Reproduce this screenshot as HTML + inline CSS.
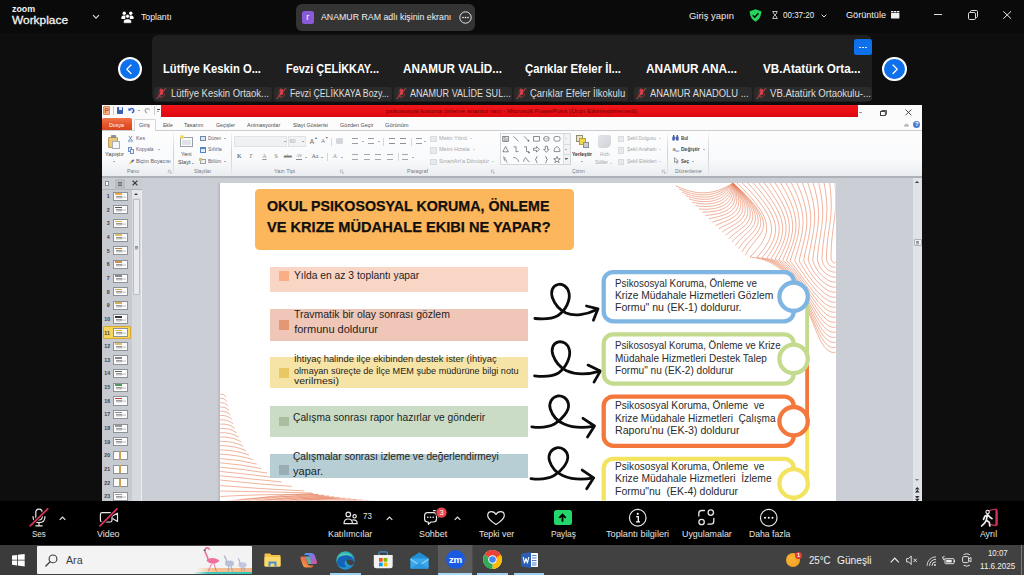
<!DOCTYPE html>
<html lang="tr"><head>
<meta charset="utf-8">
<title>Zoom Workplace</title>
<style>
html,body{margin:0;padding:0;}
body{width:1024px;height:575px;overflow:hidden;background:#000;position:relative;font-family:"Liberation Sans",sans-serif;color:#fff;}
.a{position:absolute;}
.t{position:absolute;white-space:nowrap;line-height:1;transform-origin:0 0;}
svg{position:absolute;overflow:visible;}
/* top bar */
#topbar{left:0;top:0;width:1024px;height:33px;background:#0a0a0a;}
#below{left:0;top:33px;width:1024px;height:468px;background:#0e0e0e;}
#pill{left:296px;top:4px;width:179px;height:26.5px;background:#343434;border-radius:6px;}
#purple{left:301.5px;top:11.3px;width:12.5px;height:12.5px;background:#8a5bd8;border-radius:2.5px;}
#strip{left:152px;top:35px;width:720px;height:67px;background:#1f1f1f;border-radius:6px;}
.nm{font-weight:bold;font-size:12px;color:#fff;}
.lb{top:86.7px;height:14.6px;background:#2b2b2b;border-radius:3px;}
.lbt{font-size:10px;color:#dedede;}
.arrowc{width:20.200px;height:20.200px;border-radius:50%;background:#0e71eb;border:2px solid #fff;}

.tb{font-size:5.600px;color:#4a4d52;}
.rb{font-size:5.400px;color:#5e6268;}
.rl{font-size:5.400px;color:#a3a7ad;}
.rg{font-size:5.400px;color:#767b82;}
.gs{top:133px;width:0.7px;height:41px;background:linear-gradient(#f0f1f3,#cdd1d6 50%,#e3e5e8);}
.dd{width:0;height:0;border-left:1.200px solid transparent;border-right:1.200px solid transparent;border-top:1.500px solid #666;}
.li{width:6px;height:6.500px;box-sizing:border-box;border-top:0.8px solid #9a9fa7;border-bottom:0.8px solid #9a9fa7;background:linear-gradient(transparent 42%,#9a9fa7 42%,#9a9fa7 58%,transparent 58%);}
.li2{width:6px;height:6.500px;box-sizing:border-box;border-top:1px solid #a4a8af;border-bottom:1px solid #a4a8af;background:linear-gradient(transparent 40%,#a4a8af 40%,#a4a8af 62%,transparent 62%);}
.ic{width:6.500px;height:6.500px;opacity:.6;background:#dcdfe3;border:0.5px solid #c2c6cc;box-sizing:border-box;border-radius:0.8px;}
.zl{font-size:9.600px;color:#e4e4e4;}
</style>
</head>
<body>
<div id="topbar" class="a"></div>
<div id="below" class="a"></div>
<!-- zoom workplace logo text -->
<span class="t" style="left: 12px; font-size: 9.3px; color: rgb(242, 242, 242); font-weight: bold; top: 4.83px; transform: scaleX(0.955);">zoom</span>
<span class="t" style="left: 12px; font-size: 11.4px; color: rgb(242, 242, 242); -webkit-text-stroke: 0.3px rgb(242, 242, 242); top: 14.95px; transform: scaleX(1.045);">Workplace</span>
<svg style="left:92px;top:14px" width="8" height="6" viewBox="0 0 8 6"><path d="M1 1.2 L4 4.2 L7 1.2" fill="none" stroke="#ddd" stroke-width="1.1"></path></svg>
<!-- people icon -->
<svg style="left:121px;top:11px" width="13" height="12.5" viewBox="0 0 26 25">
 <circle cx="6.5" cy="4.5" r="3.4" fill="#fff"></circle><circle cx="19.5" cy="4.5" r="3.4" fill="#fff"></circle>
 <path d="M0.5 14 C0.5 9.5 4 9 6.5 9 C9 9 10 9.8 10 9.8 L8 16 L2.5 16 C1 16 0.5 15.3 0.5 14Z" fill="#fff"></path>
 <path d="M25.5 14 C25.5 9.5 22 9 19.5 9 C17 9 16 9.8 16 9.8 L18 16 L23.500 16 C25 16 25.5 15.3 25.5 14Z" fill="#fff"></path>
 <circle cx="13" cy="10.5" r="4" fill="#fff" stroke="#0a0a0a" stroke-width="1.4"></circle>
 <path d="M5 21.500 C5 17 9 16 13 16 C17 16 21 17 21 21.500 C21 23.500 20 24.500 18.500 24.500 L7.500 24.500 C6 24.500 5 23.500 5 21.500Z" fill="#fff" stroke="#0a0a0a" stroke-width="1.2"></path>
</svg>
<span class="t" style="left: 141.4px; font-size: 9.8px; color: rgb(240, 240, 240); top: 11.7px; transform: scaleX(0.891);">Toplantı</span>
<!-- pill -->
<div id="pill" class="a"></div>
<div id="purple" class="a"></div>
<span class="t" style="left: 306.3px; font-size: 9px; color: rgb(255, 255, 255); top: 13.38px;">r</span>
<span class="t" style="left: 321px; font-size: 9.6px; color: rgb(240, 240, 240); top: 11.97px; transform: scaleX(0.915);">ANAMUR RAM adlı kişinin ekranı</span>
<svg style="left:458.500px;top:11px" width="13" height="13" viewBox="0 0 13 13"><circle cx="6.5" cy="6.5" r="5.7" fill="none" stroke="#e8e8e8" stroke-width="1"></circle><circle cx="4" cy="6.5" r="0.8" fill="#fff"></circle><circle cx="6.5" cy="6.5" r="0.8" fill="#fff"></circle><circle cx="9" cy="6.5" r="0.8" fill="#fff"></circle></svg>
<!-- right side -->
<span class="t" style="left: 689.4px; font-size: 9.8px; color: rgb(237, 237, 237); top: 10.5px; transform: scaleX(0.961);">Giriş yapın</span>
<svg style="left:749.4px;top:8.6px" width="13" height="13" viewBox="0 0 26 26"><path d="M13 0.5 L24.500 4.500 C24.500 4.500 25.500 19 13 25.500 C0.5 19 1.500 4.500 1.500 4.500Z" fill="#24d65a"></path><path d="M7.500 12.500 L11.500 16.500 L19 8.500" fill="none" stroke="#0a0a0a" stroke-width="3"></path></svg>
<svg style="left:772.3px;top:11.2px" width="6" height="8" viewBox="0 0 12 16"><path d="M1 1 H11 M1 15 H11 M2.500 1 V4 L6 8 L9.500 4 V1 M2.500 15 V12 L6 8 L9.500 12 V15" fill="none" stroke="#e6e6e6" stroke-width="1.6"></path></svg>
<span class="t" style="left: 782.8px; font-size: 9.6px; color: rgb(240, 240, 240); top: 10.17px; transform: scaleX(0.835);">00:37:20</span>
<svg style="left:820.5px;top:13.6px" width="6" height="4" viewBox="0 0 6 4"><path d="M0.6 0.6 L3 3 L5.4 0.6" fill="none" stroke="#ddd" stroke-width="1"></path></svg>
<span class="t" style="left: 845.5px; font-size: 9.6px; color: rgb(240, 240, 240); top: 10.07px; transform: scaleX(0.949);">Görüntüle</span>
<svg style="left:891px;top:10.9px" width="8.4" height="7.6" viewBox="0 0 84 76"><rect x="0" y="0" width="24" height="14" fill="#eee"></rect><rect x="30" y="0" width="24" height="14" fill="#eee"></rect><rect x="60" y="0" width="24" height="14" fill="#eee"></rect><rect x="0" y="20" width="84" height="56" rx="6" fill="#eee"></rect></svg>
<div class="a" style="left:934px;top:14.2px;width:8.4px;height:1px;background:#ddd"></div>
<svg style="left:967.5px;top:10.3px" width="10" height="10" viewBox="0 0 10 10"><rect x="0.5" y="2.500" width="7" height="7" rx="1.2" fill="none" stroke="#ddd" stroke-width="1"></rect><path d="M2.500 2.500 V1.700 Q2.500 0.5 3.700 0.5 H8.300 Q9.500 0.5 9.500 1.700 V6.300 Q9.500 7.500 8.300 7.500 H7.500" fill="none" stroke="#ddd" stroke-width="1"></path></svg>
<svg style="left:1002.7px;top:11.2px" width="8.4" height="8" viewBox="0 0 8.4 8"><path d="M0.3 0.3 L8.100 7.700 M8.100 0.3 L0.3 7.700" stroke="#e6e6e6" stroke-width="1"></path></svg>

<!-- gallery strip -->
<div id="strip" class="a"></div>
<div class="a arrowc" style="left:117.5px;top:56.800px"></div>
<svg style="left:124.500px;top:63.500px" width="8" height="10.500" viewBox="0 0 8 10.500"><path d="M6 1 L1.800 5.250 L6 9.500" fill="none" stroke="#fff" stroke-width="1.250" stroke-linecap="round" stroke-linejoin="round"></path></svg>
<div class="a arrowc" style="left:882.4px;top:56.800px"></div>
<svg style="left:890.5px;top:63.500px" width="8" height="10.500" viewBox="0 0 8 10.500"><path d="M2 1 L6.200 5.250 L2 9.500" fill="none" stroke="#fff" stroke-width="1.250" stroke-linecap="round" stroke-linejoin="round"></path></svg>
<div class="a" style="left:854px;top:39px;width:17.5px;height:16px;background:#0e71eb;border-radius:2.5px"></div>
<div class="a" style="left:859.3px;top:46.500px;width:1.6px;height:1.6px;background:#fff;border-radius:50%;box-shadow:3px 0 0 #fff,6px 0 0 #fff"></div>

<span class="t nm" style="left: 163px; top: 62.64px; transform: scaleX(0.936);">Lütfiye Keskin O...</span>
<span class="t nm" style="left: 285.5px; top: 62.64px; transform: scaleX(0.909);">Fevzi ÇELİKKAY...</span>
<span class="t nm" style="left: 403px; top: 62.64px; transform: scaleX(0.973);">ANAMUR VALİD...</span>
<span class="t nm" style="left: 524.5px; top: 62.64px; transform: scaleX(0.947);">Çarıklar Efeler İl...</span>
<span class="t nm" style="left: 646px; top: 62.64px; transform: scaleX(0.987);">ANAMUR ANA...</span>
<span class="t nm" style="left: 763px; top: 62.64px; transform: scaleX(0.975);">VB.Atatürk Orta...</span>

<div class="a lb" style="left:154.4px;width:117.3px"></div>
<div class="a lb" style="left:274.4px;width:117.3px"></div>
<div class="a lb" style="left:394.4px;width:117.3px"></div>
<div class="a lb" style="left:514.4px;width:114px"></div>
<div class="a lb" style="left:634.4px;width:117.3px"></div>
<div class="a lb" style="left:754.4px;width:117.3px"></div>
<span class="t lbt" style="left: 170.7px; top: 89.04px; transform: scaleX(0.948);">Lütfiye Keskin Ortaok...</span>
<span class="t lbt" style="left: 290.4px; top: 89.04px; transform: scaleX(0.877);">Fevzi ÇELİKKAYA Bozy...</span>
<span class="t lbt" style="left: 410px; top: 89.04px; transform: scaleX(0.903);">ANAMUR VALİDE SUL...</span>
<span class="t lbt" style="left: 530.4px; top: 89.04px; transform: scaleX(0.946);">Çarıklar Efeler İlkokulu</span>
<span class="t lbt" style="left: 649.5px; top: 89.04px; transform: scaleX(0.938);">ANAMUR ANADOLU ...</span>
<span class="t lbt" style="left: 769.5px; top: 89.04px; transform: scaleX(0.956);">VB.Atatürk Ortaokulu-...</span>
<svg style="left:156.300px;top:88.300px" width="10.500" height="11.500" viewBox="0 0 10.500 11.500"><rect x="3.500" y="0.5" width="3.600" height="6.500" rx="1.800" fill="#d23a42"></rect><path d="M2 5.500 Q2 8.800 5.300 8.800 Q8.600 8.800 8.600 5.500 M5.300 8.800 V10.600" fill="none" stroke="#c8363c" stroke-width="0.8" opacity=".8"></path><path d="M0.800 11 L9.800 0.300" stroke="#e2555b" stroke-width="0.9"></path></svg>
<svg style="left:276.300px;top:88.300px" width="10.500" height="11.500" viewBox="0 0 10.500 11.500"><rect x="3.500" y="0.5" width="3.600" height="6.500" rx="1.800" fill="#d23a42"></rect><path d="M2 5.500 Q2 8.800 5.300 8.800 Q8.600 8.800 8.600 5.500 M5.300 8.800 V10.600" fill="none" stroke="#c8363c" stroke-width="0.8" opacity=".8"></path><path d="M0.800 11 L9.800 0.300" stroke="#e2555b" stroke-width="0.9"></path></svg>
<svg style="left:396.300px;top:88.300px" width="10.500" height="11.500" viewBox="0 0 10.500 11.500"><rect x="3.500" y="0.5" width="3.600" height="6.500" rx="1.800" fill="#d23a42"></rect><path d="M2 5.500 Q2 8.800 5.300 8.800 Q8.600 8.800 8.600 5.500 M5.300 8.800 V10.600" fill="none" stroke="#c8363c" stroke-width="0.8" opacity=".8"></path><path d="M0.800 11 L9.800 0.300" stroke="#e2555b" stroke-width="0.9"></path></svg>
<svg style="left:516.300px;top:88.300px" width="10.500" height="11.500" viewBox="0 0 10.500 11.500"><rect x="3.500" y="0.5" width="3.600" height="6.500" rx="1.800" fill="#d23a42"></rect><path d="M2 5.500 Q2 8.800 5.300 8.800 Q8.600 8.800 8.600 5.500 M5.300 8.800 V10.600" fill="none" stroke="#c8363c" stroke-width="0.8" opacity=".8"></path><path d="M0.800 11 L9.800 0.300" stroke="#e2555b" stroke-width="0.9"></path></svg>
<svg style="left:636.300px;top:88.300px" width="10.500" height="11.500" viewBox="0 0 10.500 11.500"><rect x="3.500" y="0.5" width="3.600" height="6.500" rx="1.800" fill="#d23a42"></rect><path d="M2 5.500 Q2 8.800 5.300 8.800 Q8.600 8.800 8.600 5.500 M5.300 8.800 V10.600" fill="none" stroke="#c8363c" stroke-width="0.8" opacity=".8"></path><path d="M0.800 11 L9.800 0.300" stroke="#e2555b" stroke-width="0.9"></path></svg>
<svg style="left:756.300px;top:88.300px" width="10.500" height="11.500" viewBox="0 0 10.500 11.500"><rect x="3.500" y="0.5" width="3.600" height="6.500" rx="1.800" fill="#d23a42"></rect><path d="M2 5.500 Q2 8.800 5.300 8.800 Q8.600 8.800 8.600 5.500 M5.300 8.800 V10.600" fill="none" stroke="#c8363c" stroke-width="0.8" opacity=".8"></path><path d="M0.800 11 L9.800 0.300" stroke="#e2555b" stroke-width="0.9"></path></svg>

<!-- ===== shared screen: PowerPoint ===== -->
<div class="a" style="left:102px;top:104.500px;width:820px;height:396px;background:#b7babf"></div>
<!-- title bar -->
<div class="a" style="left:102px;top:104.500px;width:820px;height:14px;background:#fbfbfc"></div>
<div class="a" style="left:161px;top:105.3px;width:697px;height:12px;background:linear-gradient(#f0181c,#e80d12 60%,#d90a10)"></div>
<span class="t" style="left: 386px; font-size: 6.2px; color: rgb(109, 6, 8); top: 108.35px; transform: scaleX(1.034);">psikososyal koruma önleme anamur ram  -  Microsoft PowerPoint (Ürün Etkinleştirilemedi)</span>
<!-- QAT -->
<div class="a" style="left:103px;top:106.400px;width:7px;height:8.400px;background:#f6b48c;border:0.7px solid #e58a55;box-sizing:border-box;border-radius:1px"></div>
<span class="t" style="left: 104.5px; font-size: 6.8px; font-weight: bold; color: rgb(214, 83, 29); top: 107.54px;">P</span>
<div class="a" style="left:112.5px;top:106px;width:1px;height:9px;background:#c8ccd1"></div>
<div class="a" style="left:117px;top:107px;width:6px;height:6.5px;background:#3d5fb0;border-radius:0.8px"></div>
<div class="a" style="left:118.5px;top:107px;width:3px;height:2.5px;background:#dfe6f5"></div>
<svg style="left:128px;top:107px" width="7" height="7" viewBox="0 0 7 7"><path d="M1 3 Q3.500 0.5 5.500 2.500 Q6.500 4.500 4 6" fill="none" stroke="#3b62c4" stroke-width="1.400"></path><path d="M0.3 1 L0.6 4 L3.500 3.300Z" fill="#3b62c4"></path></svg>
<div class="a" style="left:137.500px;top:110px;width:0;height:0;border-left:1.300px solid transparent;border-right:1.300px solid transparent;border-top:1.600px solid #444"></div>
<svg style="left:144px;top:107px" width="7" height="7" viewBox="0 0 7 7"><path d="M5.800 3 Q3.500 0.5 1.500 2.500 Q0.5 4.500 3 6" fill="none" stroke="#a9adb3" stroke-width="1.300"></path></svg>
<div class="a" style="left:154.300px;top:106px;width:1px;height:9px;background:#c8ccd1"></div>
<div class="a" style="left:157px;top:108.500px;width:3px;height:1px;background:#444"></div>
<div class="a" style="left:157px;top:110.500px;width:0;height:0;border-left:1.500px solid transparent;border-right:1.500px solid transparent;border-top:1.800px solid #444"></div>
<!-- window buttons -->
<div class="a" style="left:859px;top:111.800px;width:3px;height:1px;background:#999"></div>
<svg style="left:880px;top:109.500px" width="7" height="6" viewBox="0 0 7 6"><rect x="0.5" y="1.500" width="4.800" height="4" fill="#fff" stroke="#444" stroke-width="1"></rect><path d="M1.800 1.500 V0.5 H6.500 V4.300 H5.300" fill="none" stroke="#444" stroke-width="0.9"></path></svg>
<svg style="left:905px;top:109px" width="7" height="7" viewBox="0 0 7 7"><path d="M0.5 0.5 L6.300 6.300 M6.300 0.5 L0.5 6.300" stroke="#333" stroke-width="0.9"></path></svg>
<!-- tab row -->
<div class="a" style="left:102px;top:118.500px;width:820px;height:12px;background:#fcfcfd;border-bottom:1px solid #c9cdd2;box-sizing:border-box"></div>
<div class="a" style="left:102.300px;top:118.200px;width:29.600px;height:12px;background:linear-gradient(#f27548,#e5532a 55%,#d9461e);border-radius:1.500px 1.500px 0 0"></div>
<div class="a" style="left:133.800px;top:118.500px;width:22px;height:12.300px;background:#fdfdfe;border:1px solid #d3d6db;border-bottom:none;box-sizing:border-box;border-radius:1.500px 1.500px 0 0"></div>
<span class="t tb" style="left: 109.4px; color: rgb(255, 255, 255); top: 122.66px; transform: scaleX(0.946);">Dosya</span>
<span class="t tb" style="left: 139.4px; top: 122.66px; transform: scaleX(0.957);">Giriş</span>
<span class="t tb" style="left: 162.5px; top: 122.66px; transform: scaleX(0.891);">Ekle</span>
<span class="t tb" style="left: 184px; top: 122.66px; transform: scaleX(0.965);">Tasarım</span>
<span class="t tb" style="left: 216px; top: 122.66px; transform: scaleX(0.926);">Geçişler</span>
<span class="t tb" style="left: 247.3px; top: 122.66px; transform: scaleX(0.98);">Animasyonlar</span>
<span class="t tb" style="left: 292.8px; top: 122.66px; transform: scaleX(0.971);">Slayt Gösterisi</span>
<span class="t tb" style="left: 339.7px; top: 122.66px; transform: scaleX(0.971);">Gözden Geçir</span>
<span class="t tb" style="left: 385px; top: 122.66px; transform: scaleX(1.007);">Görünüm</span>
<svg style="left:904px;top:122.500px" width="5" height="3.500" viewBox="0 0 5 3.500"><path d="M0.5 3 L2.500 0.8 L4.500 3Z" fill="none" stroke="#777" stroke-width="0.7"></path></svg>
<div class="a" style="left:913px;top:120.500px;width:7px;height:7px;border-radius:50%;background:#4a7fd0"></div>
<span class="t" style="left: 915px; font-size: 6px; font-weight: bold; color: rgb(255, 255, 255); top: 121.12px;">?</span>
<!-- ribbon body -->
<div class="a" style="left:102px;top:130.500px;width:820px;height:45.500px;background:linear-gradient(#fdfdfe,#f9fafb 62%,#eaedf0)"></div>
<div class="a" style="left:102px;top:176px;width:820px;height:1.500px;background:#aeb2b8"></div>
<!-- group separators -->
<div class="a gs" style="left:173.200px"></div><div class="a gs" style="left:231.300px"></div><div class="a gs" style="left:345.700px"></div><div class="a gs" style="left:496.600px"></div><div class="a gs" style="left:667.200px"></div><div class="a gs" style="left:708px"></div>
<!-- Pano -->
<div class="a" style="left:108.400px;top:136.500px;width:10px;height:11.500px;background:#e9c978;border:0.6px solid #b79a55;border-radius:1px;box-sizing:border-box"></div>
<div class="a" style="left:111px;top:135.300px;width:4.800px;height:2.500px;background:#8d9299;border-radius:0.6px"></div>
<div class="a" style="left:112px;top:140.500px;width:7.500px;height:8px;background:#f4f6f9;border:0.6px solid #a9aeb6;box-sizing:border-box"></div>
<span class="t rb" style="left: 104.7px; color: rgb(68, 68, 68); top: 152.23px; transform: scaleX(1.034);">Yapıştır</span>
<div class="a dd" style="left:113px;top:160.500px"></div>
<svg style="left:128px;top:135.500px" width="5" height="6" viewBox="0 0 5 6"><path d="M1 0 L3.500 4 M4 0 L1.500 4" stroke="#5a7fb5" stroke-width="0.8"></path><circle cx="1.200" cy="5" r="0.9" fill="none" stroke="#5a7fb5" stroke-width="0.6"></circle><circle cx="3.800" cy="5" r="0.9" fill="none" stroke="#5a7fb5" stroke-width="0.6"></circle></svg>
<div class="a" style="left:127.500px;top:147px;width:4px;height:5px;background:#dfe7f3;border:0.5px solid #6f8fc0;box-sizing:border-box"></div><div class="a" style="left:129.500px;top:148.500px;width:4px;height:5px;background:#eef2f9;border:0.5px solid #6f8fc0;box-sizing:border-box"></div>
<svg style="left:127.500px;top:158.500px" width="6.500" height="6" viewBox="0 0 6.500 6"><path d="M0.5 5.500 L3 2 L4.500 3.500Z" fill="#e5b13a"></path><path d="M3 2 L5.500 0.3 L6.200 1.500 L4.500 3.500Z" fill="#4f6fa8"></path></svg>
<span class="t rb" style="left: 135.6px; top: 135.83px; transform: scaleX(0.968);">Kes</span>
<span class="t rb" style="left: 135.6px; top: 147.03px; transform: scaleX(0.898);">Kopyala</span><div class="a dd" style="left:158px;top:149px"></div>
<span class="t rb" style="left: 135.6px; top: 158.53px; transform: scaleX(0.984);">Biçim Boyacısı</span>
<span class="t rg" style="left: 126.6px; top: 168.63px; transform: scaleX(0.953);">Pano</span>
<svg class="dl" style="left:167.500px;top:169.500px" width="3.500" height="3.500" viewBox="0 0 3.500 3.500"><path d="M0.3 0.3 H3 M0.3 0.3 V3 M1.500 1.500 L3.200 3.200 M3.200 1.800 V3.200 H1.800" fill="none" stroke="#8a8f96" stroke-width="0.5"></path></svg>
<!-- Slaytlar -->
<div class="a" style="left:180px;top:136.500px;width:12.500px;height:10px;background:#fbfcfd;border:0.6px solid #9aa0a8;box-sizing:border-box"></div>
<div class="a" style="left:181.500px;top:139.500px;width:9.500px;height:5.500px;background:#dfe3e8"></div>
<div class="a" style="left:179.500px;top:135.300px;width:4px;height:4px;background:#f4dc5b;border-radius:50%"></div>
<span class="t rb" style="left: 181px; color: rgb(68, 68, 68); top: 152.23px; transform: scaleX(1.01);">Yeni</span>
<span class="t rb" style="left: 178.4px; color: rgb(68, 68, 68); top: 160.13px; transform: scaleX(1.043);">Slayt</span><div class="a dd" style="left:192px;top:162.500px"></div>
<div class="a" style="left:199.500px;top:136px;width:6.500px;height:5px;background:#e1e6ee;border:0.6px solid #6f86aa;box-sizing:border-box"></div>
<div class="a" style="left:199.500px;top:147px;width:6.500px;height:5.500px;background:#4f86c6;border-radius:0.5px"></div><div class="a" style="left:201px;top:149px;width:3.500px;height:2.500px;background:#e6eef8"></div>
<div class="a" style="left:199.500px;top:158.500px;width:6.500px;height:5.500px;background:#eef0f3;border:0.6px solid #9aa0a8;box-sizing:border-box"></div><div class="a" style="left:199px;top:158px;width:2.500px;height:2.500px;background:#e3c34f"></div>
<span class="t rb" style="left: 208.3px; top: 135.83px; transform: scaleX(0.834);">Düzen</span><div class="a dd" style="left:223.500px;top:137.800px"></div>
<span class="t rb" style="left: 208.3px; top: 147.03px; transform: scaleX(0.972);">Sıfırla</span>
<span class="t rb" style="left: 208.3px; top: 158.53px; transform: scaleX(0.851);">Bölüm</span><div class="a dd" style="left:223.500px;top:160.500px"></div>
<span class="t rg" style="left: 194.4px; top: 168.63px; transform: scaleX(0.956);">Slaytlar</span>
<!-- Yazi Tipi -->
<div class="a" style="left:234px;top:135.600px;width:52.500px;height:11.300px;background:#eff1f3;border:0.6px solid #dfe2e6;box-sizing:border-box"></div>
<div class="a dd" style="left:283.500px;top:140.500px"></div>
<div class="a" style="left:287.500px;top:135.600px;width:18px;height:11.300px;background:#f2f3f5;border:0.6px solid #dfe2e6;box-sizing:border-box"></div>
<span class="t rl" style="left: 289.5px; top: 138.63px;">60</span><div class="a dd" style="left:302px;top:140.500px"></div>
<span class="t" style="left: 309.8px; font-size: 6.5px; color: rgb(102, 102, 102); top: 138.5px;">A</span><span class="t" style="left: 314.3px; font-size: 3.5px; color: rgb(102, 102, 102); top: 137.04px;">▲</span>
<span class="t" style="left: 321.3px; font-size: 5.5px; color: rgb(119, 119, 119); top: 139.34px;">A</span><span class="t" style="left: 325px; font-size: 3.5px; color: rgb(119, 119, 119); top: 137.04px;">▼</span>
<div class="a" style="left:330.500px;top:137.500px;width:0.6px;height:8px;background:#d5d8dd"></div>
<div class="a" style="left:335.500px;top:138px;width:7px;height:5.500px;background:#c9ccd2;border-radius:1.500px;opacity:.8"></div>
<span class="t" style="left: 237px; font-size: 6px; font-weight: bold; color: rgb(119, 119, 119); font-family: &quot;Liberation Serif&quot;, serif; top: 153.42px;">K</span>
<span class="t" style="left: 249px; font-size: 6px; font-style: italic; color: rgb(119, 119, 119); font-family: &quot;Liberation Serif&quot;, serif; top: 153.42px;">T</span>
<span class="t" style="left: 262.3px; font-size: 6px; color: rgb(153, 153, 153); text-decoration: underline; font-family: &quot;Liberation Serif&quot;, serif; top: 153.42px;">A</span>
<span class="t" style="left: 274.5px; font-size: 6px; color: rgb(153, 153, 153); font-weight: bold; font-family: &quot;Liberation Serif&quot;, serif; top: 153.42px;">S</span>
<span class="t" style="left: 283.8px; font-size: 5px; color: rgb(119, 119, 119); text-decoration: line-through; top: 154.27px;">abc</span>
<span class="t" style="left: 296.3px; font-size: 4.5px; color: rgb(119, 119, 119); font-family: &quot;Liberation Serif&quot;, serif; top: 153.69px;">AV</span><div class="a" style="left:296.300px;top:158.800px;width:6px;height:0.6px;background:#888"></div><div class="a dd" style="left:305px;top:156.500px"></div>
<span class="t" style="left: 311.5px; font-size: 6px; color: rgb(102, 102, 102); font-family: &quot;Liberation Serif&quot;, serif; top: 153.42px;">Aa</span><div class="a dd" style="left:321px;top:156.500px"></div>
<div class="a" style="left:326.500px;top:152.500px;width:0.6px;height:8px;background:#d5d8dd"></div>
<span class="t" style="left: 332.5px; font-size: 6.5px; color: rgb(153, 153, 153); font-family: &quot;Liberation Serif&quot;, serif; top: 153px;">A</span><div class="a dd" style="left:341px;top:156.500px"></div>
<span class="t rg" style="left: 273.5px; top: 168.63px; transform: scaleX(1.035);">Yazı Tipi</span>
<svg class="dl" style="left:339.500px;top:169.500px" width="3.500" height="3.500" viewBox="0 0 3.500 3.500"><path d="M0.3 0.3 H3 M0.3 0.3 V3 M1.500 1.500 L3.200 3.200 M3.200 1.800 V3.200 H1.800" fill="none" stroke="#8a8f96" stroke-width="0.5"></path></svg>
<!-- Paragraf -->
<div class="a li" style="left:352px;top:137.500px"></div><div class="a dd" style="left:361.500px;top:140.500px"></div>
<div class="a li" style="left:368px;top:137.500px"></div><div class="a dd" style="left:377.500px;top:140.500px"></div>
<div class="a" style="left:383px;top:137.500px;width:0.6px;height:8px;background:#d5d8dd"></div>
<div class="a li" style="left:389px;top:137.500px;border-color:#8a8f98"></div>
<div class="a li" style="left:400px;top:137.500px;border-color:#8a8f98"></div>
<div class="a" style="left:410.500px;top:137.500px;width:0.6px;height:8px;background:#d5d8dd"></div>
<div class="a li" style="left:415.500px;top:137.500px"></div><div class="a dd" style="left:424px;top:140.500px"></div>
<div class="a li2" style="left:352px;top:153.500px"></div><div class="a li2" style="left:363.500px;top:153.500px"></div><div class="a li2" style="left:375px;top:153.500px"></div><div class="a li2" style="left:387px;top:153.500px"></div>
<div class="a" style="left:397.500px;top:152.500px;width:0.6px;height:8px;background:#d5d8dd"></div>
<div class="a li2" style="left:402px;top:153.500px"></div><div class="a dd" style="left:411.500px;top:156.500px"></div>
<div class="a ic" style="left:430px;top:135.500px"></div><div class="a ic" style="left:430px;top:147px"></div><div class="a ic" style="left:430px;top:158.500px"></div>
<span class="t rl" style="left: 439px; top: 135.83px; transform: scaleX(1.03);">Metin Yönü</span><div class="a dd" style="left:470px;top:137.800px;opacity:.5"></div>
<span class="t rl" style="left: 439px; top: 147.03px; transform: scaleX(1.028);">Metni Hizala</span><div class="a dd" style="left:472.500px;top:149px;opacity:.5"></div>
<span class="t rl" style="left: 439px; top: 158.53px; transform: scaleX(1.027);">SmartArt'a Dönüştür</span><div class="a dd" style="left:491.500px;top:160.500px;opacity:.5"></div>
<span class="t rg" style="left: 407.2px; top: 168.63px; transform: scaleX(1.015);">Paragraf</span>
<svg class="dl" style="left:491px;top:169.500px" width="3.500" height="3.500" viewBox="0 0 3.500 3.500"><path d="M0.3 0.3 H3 M0.3 0.3 V3 M1.500 1.500 L3.200 3.200 M3.200 1.800 V3.200 H1.800" fill="none" stroke="#8a8f96" stroke-width="0.5"></path></svg>
<!-- Cizim -->
<div class="a" style="left:500.300px;top:133.400px;width:70.400px;height:31.500px;background:#fbfcfd;border:0.6px solid #d3d7dc;box-sizing:border-box"></div>
<div class="a" style="left:562.800px;top:133.700px;width:7.600px;height:30.800px;background:#f0f2f4;border-left:0.6px solid #d9dce1;box-sizing:border-box"></div>
<div class="a" style="left:562.800px;top:143.800px;width:7.600px;height:0.6px;background:#d9dce1"></div><div class="a" style="left:562.800px;top:154.200px;width:7.600px;height:0.6px;background:#d9dce1"></div>
<div class="a dd" style="left:565.300px;top:138px;opacity:.35"></div><div class="a dd" style="left:565.300px;top:148.500px"></div><div class="a dd" style="left:565.300px;top:159.200px"></div><div class="a" style="left:565px;top:157.600px;width:3.200px;height:0.6px;background:#666"></div>
<svg style="left:500px;top:133px" width="64" height="32" viewBox="500 133 64 32" fill="none" stroke="#555" stroke-width="0.65">
 <rect x="502.800" y="136.300" width="5.600" height="5" fill="#e3e6ea"></rect><path d="M503.600 137.500 H505.500 M503.600 139 H507.500 M503.600 140.300 H507.500" stroke-width="0.45"></path>
 <path d="M513.500 136.300 L518.500 141.300"></path>
 <path d="M524 136.300 L529 141.300"></path><path d="M529.300 141.600 L527.300 141.200 L528.900 139.600Z" fill="#555" stroke="none"></path>
 <rect x="533.700" y="136.500" width="5.600" height="4.600"></rect>
 <ellipse cx="546.400" cy="138.800" rx="2.800" ry="2.400"></ellipse><path d="M543.800 138.800 H549" stroke-width="0.4"></path>
 <rect x="554" y="136.500" width="6" height="4.600" rx="1.600"></rect>
 <path d="M505.600 146.500 L508.400 151.800 H502.800Z"></path>
 <path d="M513.500 146.800 H516 V151.600 H518.500"></path>
 <path d="M524 146.800 H526.500 V151.600 H529 M529 151.600 V153.200"></path><path d="M529 153.600 L528.100 152 H529.900Z" fill="#555" stroke="none"></path>
 <path d="M533.500 148.200 H536.500 V146.600 L539.500 149.300 L536.500 152 V150.400 H533.500Z"></path>
 <path d="M545.300 146.300 H547.500 V149.300 H549.100 L546.400 152.300 L543.700 149.300 H545.300Z"></path>
 <path d="M554.200 151.600 Q553.600 148 557 146.600 Q560.400 148 559.800 151.600Z"></path>
 <path d="M503.500 156.800 L505.500 158 L504.300 159.300 L506.800 160.300 L505.800 161.400 L507.600 162.800 M503.500 156.800 L504.600 160.800" stroke-width="0.5"></path>
 <path d="M513.300 157.500 Q517.500 157.500 518.800 161.800"></path>
 <path d="M523.500 161.800 Q525 156 526.500 158.500 Q528 161.800 529.500 161.800"></path>
 <path d="M537.600 156.500 Q536.200 156.500 536.300 158 Q536.400 159.400 535.300 159.600 Q536.400 159.800 536.300 161.200 Q536.200 162.700 537.600 162.700"></path>
 <path d="M545.200 156.500 Q546.600 156.500 546.500 158 Q546.400 159.400 547.500 159.600 Q546.400 159.800 546.500 161.200 Q546.600 162.700 545.200 162.700"></path>
 <path d="M557 156.400 L557.900 158.700 L560.300 158.800 L558.400 160.300 L559.100 162.600 L557 161.300 L554.900 162.600 L555.600 160.300 L553.700 158.800 L556.100 158.700Z"></path>
</svg>
<div class="a" style="left:576px;top:135px;width:7px;height:6.500px;background:#e9e3c6;border:0.6px solid #8f8b77;box-sizing:border-box"></div>
<div class="a" style="left:578.500px;top:137.800px;width:7.500px;height:7px;background:#f0d84f;border:0.6px solid #b5a137;box-sizing:border-box"></div>
<div class="a" style="left:582.800px;top:141.800px;width:6.500px;height:6px;background:#c8cbd1;border:0.6px solid #8a8f98;box-sizing:border-box"></div>
<span class="t rb" style="left: 572.2px; color: rgb(51, 51, 51); font-weight: bold; top: 152.23px; transform: scaleX(0.94);">Yerleştir</span><div class="a dd" style="left:581px;top:160.500px"></div>
<div class="a" style="left:598px;top:135px;width:12.500px;height:12.500px;background:linear-gradient(135deg,#e3e5e9,#cfd2d7);border-radius:2.500px 2.500px 5px 2.500px"></div>
<span class="t rl" style="left: 599.5px; top: 152.23px; transform: scaleX(0.88);">Hızlı</span>
<span class="t rl" style="left: 595px; top: 160.13px; transform: scaleX(0.964);">Stiller</span><div class="a dd" style="left:609.500px;top:162.500px;opacity:.5"></div>
<div class="a ic" style="left:617.500px;top:135.500px"></div><div class="a ic" style="left:617.500px;top:147px"></div><div class="a ic" style="left:617.500px;top:158.500px"></div>
<span class="t rl" style="left: 626.6px; top: 135.83px; transform: scaleX(0.88);">Şekil Dolgusu</span><div class="a dd" style="left:658.500px;top:137.800px;opacity:.5"></div>
<span class="t rl" style="left: 626.6px; top: 147.03px; transform: scaleX(0.895);">Şekil Anahattı</span><div class="a dd" style="left:658.500px;top:149px;opacity:.5"></div>
<span class="t rl" style="left: 626.6px; top: 158.53px; transform: scaleX(0.903);">Şekil Efektleri</span><div class="a dd" style="left:658.500px;top:160.500px;opacity:.5"></div>
<span class="t rg" style="left: 572px; top: 168.63px; transform: scaleX(0.949);">Çizim</span>
<svg class="dl" style="left:661.500px;top:169.500px" width="3.500" height="3.500" viewBox="0 0 3.500 3.500"><path d="M0.3 0.3 H3 M0.3 0.3 V3 M1.500 1.500 L3.200 3.200 M3.200 1.800 V3.200 H1.800" fill="none" stroke="#8a8f96" stroke-width="0.5"></path></svg>
<!-- Duzenleme -->
<svg style="left:672.300px;top:135.300px" width="7" height="6" viewBox="0 0 7 6"><rect x="0.3" y="1.500" width="2.600" height="4" rx="0.6" fill="#4a5fa8"></rect><rect x="4" y="1.500" width="2.600" height="4" rx="0.6" fill="#4a5fa8"></rect><rect x="1" y="0" width="1.400" height="2" fill="#4a5fa8"></rect><rect x="4.600" y="0" width="1.400" height="2" fill="#4a5fa8"></rect><rect x="2.500" y="2.500" width="2" height="1" fill="#4a5fa8"></rect></svg>
<span class="t" style="left: 672.5px; font-size: 5.5px; color: rgb(85, 85, 85); top: 146.84px;">a</span><span class="t" style="left: 675.3px; font-size: 4px; color: rgb(61, 106, 181); top: 148.61px;">ac</span>
<svg style="left:674px;top:157px" width="5" height="7" viewBox="0 0 5 7"><path d="M0.5 0.5 V5.500 L1.800 4.300 L2.800 6.500 L3.600 6.100 L2.600 4 H4.300Z" fill="#fff" stroke="#444" stroke-width="0.5"></path></svg>
<span class="t rb" style="left: 681.3px; font-weight: bold; color: rgb(68, 68, 68); top: 135.83px; transform: scaleX(0.806);">Bul</span>
<span class="t rb" style="left: 681.3px; font-weight: bold; color: rgb(68, 68, 68); top: 147.03px; transform: scaleX(0.931);">Değiştir</span><div class="a dd" style="left:703px;top:149px"></div>
<span class="t rb" style="left: 681.3px; font-weight: bold; color: rgb(68, 68, 68); top: 158.53px; transform: scaleX(0.834);">Seç</span><div class="a dd" style="left:692px;top:160.500px"></div>
<span class="t rg" style="left: 675.3px; top: 168.63px; transform: scaleX(0.979);">Düzenleme</span>

<!-- slide area -->
<div class="a" style="left:102px;top:177.500px;width:40px;height:323px;background:#c7cad0"></div>
<div class="a" style="left:140.800px;top:177.500px;width:1.400px;height:323px;background:#eceef1"></div>
<div class="a" style="left:142.200px;top:177.500px;width:78.300px;height:323px;background:#cbced4"></div><div class="a" style="left:217.300px;top:182.500px;width:3px;height:318px;background:linear-gradient(90deg,rgba(150,154,162,0),rgba(150,154,162,.45))"></div>
<div class="a" style="left:835.700px;top:177.500px;width:77.500px;height:323px;background:#cbced4"></div>
<div class="a" style="left:220px;top:177.500px;width:616px;height:5px;background:#cbced4"></div>
<div class="a" style="left:102px;top:177.500px;width:40px;height:12.500px;background:#c9ccd1;border-bottom:0.6px solid #b0b4ba;box-sizing:border-box"></div>
<div class="a" style="left:104.500px;top:180.500px;width:4px;height:5.500px;background:#fdfdfd;border:0.5px solid #8a8f98;box-sizing:border-box"></div>
<div class="a" style="left:114.500px;top:178.500px;width:10px;height:11px;background:#b9bdc3"></div>
<div class="a" style="left:117.500px;top:181.500px;width:4.500px;height:0.7px;background:#6b7078;box-shadow:0 1.500px 0 #6b7078,0 3px 0 #6b7078"></div>
<svg style="left:131.500px;top:180.300px" width="6" height="6" viewBox="0 0 6 6"><path d="M0.6 0.6 L5.400 5.400 M5.400 0.6 L0.6 5.400" stroke="#3a3d42" stroke-width="1.300"></path></svg>
<div class="a" style="left:132.300px;top:189.500px;width:8.300px;height:311px;background:#d6d9de"></div><div class="a" style="left:132.300px;top:189.500px;width:8.300px;height:8.500px;background:#e4e6ea"></div>
<div class="a" style="left:133px;top:199px;width:6.800px;height:96px;background:#e8eaee;border:0.5px solid #bcc0c6;box-sizing:border-box;border-radius:1px"></div>
<div class="a" style="left:134.300px;top:192.600px;width:0;height:0;border-left:2.200px solid transparent;border-right:2.200px solid transparent;border-bottom:2.600px solid #3a3d42"></div>
<div class="a" style="left:134.900px;top:245.500px;width:3px;height:0.5px;background:#8a8f98;box-shadow:0 1.200px 0 #8a8f98,0 2.400px 0 #8a8f98"></div>
<span class="t" style="left: 106.8px; font-size: 5.2px; font-weight: bold; color: rgb(61, 64, 70); top: 194px;">1</span>
<div class="a" style="left:113.200px;top:191.60px;width:15px;height:9.200px;background:#fcfcfc;border:0.5px solid #8d9299;box-sizing:border-box"></div>
<div class="a" style="left:115px;top:193.20px;width:7px;height:1.500px;background:#f4a63f"></div>
<div class="a" style="left:115.500px;top:195.70px;width:6px;height:0.6px;background:#999;box-shadow:0 1.300px 0 #aaa,4px 0.6px 0 #bbb"></div>
<span class="t" style="left: 106.8px; font-size: 5.2px; font-weight: bold; color: rgb(61, 64, 70); top: 207.65px;">2</span>
<div class="a" style="left:113.200px;top:205.25px;width:15px;height:9.200px;background:#fcfcfc;border:0.5px solid #8d9299;box-sizing:border-box"></div>
<div class="a" style="left:115px;top:206.85px;width:7px;height:1.500px;background:#555"></div>
<div class="a" style="left:115.500px;top:209.35px;width:6px;height:0.6px;background:#999;box-shadow:0 1.300px 0 #aaa,4px 0.6px 0 #bbb"></div>
<span class="t" style="left: 106.8px; font-size: 5.2px; font-weight: bold; color: rgb(61, 64, 70); top: 221.3px;">3</span>
<div class="a" style="left:113.200px;top:218.90px;width:15px;height:9.200px;background:#fcfcfc;border:0.5px solid #8d9299;box-sizing:border-box"></div>
<div class="a" style="left:115px;top:220.50px;width:7px;height:1.500px;background:#e9b04a"></div>
<div class="a" style="left:115.500px;top:223.00px;width:6px;height:0.6px;background:#999;box-shadow:0 1.300px 0 #aaa,4px 0.6px 0 #bbb"></div>
<span class="t" style="left: 106.8px; font-size: 5.2px; font-weight: bold; color: rgb(61, 64, 70); top: 234.95px;">4</span>
<div class="a" style="left:113.200px;top:232.55px;width:15px;height:9.200px;background:#fcfcfc;border:0.5px solid #8d9299;box-sizing:border-box"></div>
<div class="a" style="left:115px;top:234.15px;width:7px;height:1.500px;background:#e0c060"></div>
<div class="a" style="left:115.500px;top:236.65px;width:6px;height:0.6px;background:#999;box-shadow:0 1.300px 0 #aaa,4px 0.6px 0 #bbb"></div>
<span class="t" style="left: 106.8px; font-size: 5.2px; font-weight: bold; color: rgb(61, 64, 70); top: 248.6px;">5</span>
<div class="a" style="left:113.200px;top:246.20px;width:15px;height:9.200px;background:#fcfcfc;border:0.5px solid #8d9299;box-sizing:border-box"></div>
<div class="a" style="left:115px;top:247.80px;width:7px;height:1.500px;background:#c08040"></div>
<div class="a" style="left:115.500px;top:250.30px;width:6px;height:0.6px;background:#999;box-shadow:0 1.300px 0 #aaa,4px 0.6px 0 #bbb"></div>
<span class="t" style="left: 106.8px; font-size: 5.2px; font-weight: bold; color: rgb(61, 64, 70); top: 262.25px;">6</span>
<div class="a" style="left:113.200px;top:259.85px;width:15px;height:9.200px;background:#fcfcfc;border:0.5px solid #8d9299;box-sizing:border-box"></div>
<div class="a" style="left:115px;top:261.45px;width:7px;height:1.500px;background:#d09050"></div>
<div class="a" style="left:115.500px;top:263.95px;width:6px;height:0.6px;background:#999;box-shadow:0 1.300px 0 #aaa,4px 0.6px 0 #bbb"></div>
<span class="t" style="left: 106.8px; font-size: 5.2px; font-weight: bold; color: rgb(61, 64, 70); top: 275.9px;">7</span>
<div class="a" style="left:113.200px;top:273.50px;width:15px;height:9.200px;background:#fcfcfc;border:0.5px solid #8d9299;box-sizing:border-box"></div>
<div class="a" style="left:115px;top:275.10px;width:7px;height:1.500px;background:#888"></div>
<div class="a" style="left:115.500px;top:277.60px;width:6px;height:0.6px;background:#999;box-shadow:0 1.300px 0 #aaa,4px 0.6px 0 #bbb"></div>
<span class="t" style="left: 106.8px; font-size: 5.2px; font-weight: bold; color: rgb(61, 64, 70); top: 289.55px;">8</span>
<div class="a" style="left:113.200px;top:287.15px;width:15px;height:9.200px;background:#fcfcfc;border:0.5px solid #8d9299;box-sizing:border-box"></div>
<div class="a" style="left:115px;top:288.75px;width:7px;height:1.500px;background:#e0a050"></div>
<div class="a" style="left:115.500px;top:291.25px;width:6px;height:0.6px;background:#999;box-shadow:0 1.300px 0 #aaa,4px 0.6px 0 #bbb"></div>
<span class="t" style="left: 106.8px; font-size: 5.2px; font-weight: bold; color: rgb(61, 64, 70); top: 303.2px;">9</span>
<div class="a" style="left:113.200px;top:300.80px;width:15px;height:9.200px;background:#fcfcfc;border:0.5px solid #8d9299;box-sizing:border-box"></div>
<div class="a" style="left:115px;top:302.40px;width:7px;height:1.500px;background:#d0b050"></div>
<div class="a" style="left:115.500px;top:304.90px;width:6px;height:0.6px;background:#999;box-shadow:0 1.300px 0 #aaa,4px 0.6px 0 #bbb"></div>
<span class="t" style="left: 104.3px; font-size: 5.2px; font-weight: bold; color: rgb(61, 64, 70); top: 316.85px;">10</span>
<div class="a" style="left:113.200px;top:314.45px;width:15px;height:9.200px;background:#fcfcfc;border:0.5px solid #8d9299;box-sizing:border-box"></div>
<div class="a" style="left:115px;top:316.05px;width:7px;height:1.500px;background:#333"></div>
<div class="a" style="left:115.500px;top:318.55px;width:6px;height:0.6px;background:#999;box-shadow:0 1.300px 0 #aaa,4px 0.6px 0 #bbb"></div>
<div class="a" style="left:103px;top:326.40px;width:27.500px;height:12.800px;background:#f6d55c;border:0.5px solid #d8a92e;box-sizing:border-box;border-radius:1px"></div>
<span class="t" style="left: 104.3px; font-size: 5.2px; font-weight: bold; color: rgb(61, 64, 70); top: 330.5px;">11</span>
<div class="a" style="left:113.200px;top:328.10px;width:15px;height:9.200px;background:#fcfcfc;border:0.5px solid #8d9299;box-sizing:border-box"></div>
<div class="a" style="left:115px;top:329.70px;width:7px;height:1.500px;background:#f0b040"></div>
<div class="a" style="left:115.500px;top:332.20px;width:6px;height:0.6px;background:#999;box-shadow:0 1.300px 0 #aaa,4px 0.6px 0 #bbb"></div>
<span class="t" style="left: 104.3px; font-size: 5.2px; font-weight: bold; color: rgb(61, 64, 70); top: 344.15px;">12</span>
<div class="a" style="left:113.200px;top:341.75px;width:15px;height:9.200px;background:#fcfcfc;border:0.5px solid #8d9299;box-sizing:border-box"></div>
<div class="a" style="left:115px;top:343.35px;width:7px;height:1.500px;background:#e0c070"></div>
<div class="a" style="left:115.500px;top:345.85px;width:6px;height:0.6px;background:#999;box-shadow:0 1.300px 0 #aaa,4px 0.6px 0 #bbb"></div>
<span class="t" style="left: 104.3px; font-size: 5.2px; font-weight: bold; color: rgb(61, 64, 70); top: 357.8px;">13</span>
<div class="a" style="left:113.200px;top:355.40px;width:15px;height:9.200px;background:#fcfcfc;border:0.5px solid #8d9299;box-sizing:border-box"></div>
<div class="a" style="left:115px;top:357.00px;width:7px;height:1.500px;background:#888"></div>
<div class="a" style="left:115.500px;top:359.50px;width:6px;height:0.6px;background:#999;box-shadow:0 1.300px 0 #aaa,4px 0.6px 0 #bbb"></div>
<span class="t" style="left: 104.3px; font-size: 5.2px; font-weight: bold; color: rgb(61, 64, 70); top: 371.45px;">14</span>
<div class="a" style="left:113.200px;top:369.05px;width:15px;height:9.200px;background:#fcfcfc;border:0.5px solid #8d9299;box-sizing:border-box"></div>
<div class="a" style="left:115px;top:370.65px;width:7px;height:1.500px;background:#666"></div>
<div class="a" style="left:115.500px;top:373.15px;width:6px;height:0.6px;background:#999;box-shadow:0 1.300px 0 #aaa,4px 0.6px 0 #bbb"></div>
<span class="t" style="left: 104.3px; font-size: 5.2px; font-weight: bold; color: rgb(61, 64, 70); top: 385.1px;">15</span>
<div class="a" style="left:113.200px;top:382.70px;width:15px;height:9.200px;background:#fcfcfc;border:0.5px solid #8d9299;box-sizing:border-box"></div>
<div class="a" style="left:115px;top:384.30px;width:7px;height:1.500px;background:#4a9a5a"></div>
<div class="a" style="left:115.500px;top:386.80px;width:6px;height:0.6px;background:#999;box-shadow:0 1.300px 0 #aaa,4px 0.6px 0 #bbb"></div>
<span class="t" style="left: 104.3px; font-size: 5.2px; font-weight: bold; color: rgb(61, 64, 70); top: 398.75px;">16</span>
<div class="a" style="left:113.200px;top:396.35px;width:15px;height:9.200px;background:#fcfcfc;border:0.5px solid #8d9299;box-sizing:border-box"></div>
<div class="a" style="left:115px;top:397.95px;width:7px;height:1.500px;background:#c04040"></div>
<div class="a" style="left:115.500px;top:400.45px;width:6px;height:0.6px;background:#999;box-shadow:0 1.300px 0 #aaa,4px 0.6px 0 #bbb"></div>
<span class="t" style="left: 104.3px; font-size: 5.2px; font-weight: bold; color: rgb(61, 64, 70); top: 412.4px;">17</span>
<div class="a" style="left:113.200px;top:410.00px;width:15px;height:9.200px;background:#fcfcfc;border:0.5px solid #8d9299;box-sizing:border-box"></div>
<div class="a" style="left:115px;top:411.60px;width:7px;height:1.500px;background:#888"></div>
<div class="a" style="left:115.500px;top:414.10px;width:6px;height:0.6px;background:#999;box-shadow:0 1.300px 0 #aaa,4px 0.6px 0 #bbb"></div>
<span class="t" style="left: 104.3px; font-size: 5.2px; font-weight: bold; color: rgb(61, 64, 70); top: 426.05px;">18</span>
<div class="a" style="left:113.200px;top:423.65px;width:15px;height:9.200px;background:#fcfcfc;border:0.5px solid #8d9299;box-sizing:border-box"></div>
<div class="a" style="left:115px;top:425.25px;width:7px;height:1.500px;background:#999"></div>
<div class="a" style="left:115.500px;top:427.75px;width:6px;height:0.6px;background:#999;box-shadow:0 1.300px 0 #aaa,4px 0.6px 0 #bbb"></div>
<span class="t" style="left: 104.3px; font-size: 5.2px; font-weight: bold; color: rgb(61, 64, 70); top: 439.7px;">19</span>
<div class="a" style="left:113.200px;top:437.30px;width:15px;height:9.200px;background:#fcfcfc;border:0.5px solid #8d9299;box-sizing:border-box"></div>
<div class="a" style="left:115px;top:438.90px;width:7px;height:1.500px;background:#777"></div>
<div class="a" style="left:115.500px;top:441.40px;width:6px;height:0.6px;background:#999;box-shadow:0 1.300px 0 #aaa,4px 0.6px 0 #bbb"></div>
<span class="t" style="left: 104.3px; font-size: 5.2px; font-weight: bold; color: rgb(61, 64, 70); top: 453.35px;">20</span>
<div class="a" style="left:113.200px;top:450.95px;width:15px;height:9.200px;background:#fcfcfc;border:0.5px solid #8d9299;box-sizing:border-box"></div>
<div class="a" style="left:118.500px;top:451.45px;width:2.500px;height:8.200px;background:#d0a050"></div>
<span class="t" style="left: 104.3px; font-size: 5.2px; font-weight: bold; color: rgb(61, 64, 70); top: 467px;">21</span>
<div class="a" style="left:113.200px;top:464.60px;width:15px;height:9.200px;background:#fcfcfc;border:0.5px solid #8d9299;box-sizing:border-box"></div>
<div class="a" style="left:118.500px;top:465.10px;width:2.500px;height:8.200px;background:#d0a050"></div>
<span class="t" style="left: 104.3px; font-size: 5.2px; font-weight: bold; color: rgb(61, 64, 70); top: 480.65px;">22</span>
<div class="a" style="left:113.200px;top:478.25px;width:15px;height:9.200px;background:#fcfcfc;border:0.5px solid #8d9299;box-sizing:border-box"></div>
<div class="a" style="left:118.500px;top:478.75px;width:2.500px;height:8.200px;background:#d0a050"></div>
<span class="t" style="left: 104.3px; font-size: 5.2px; font-weight: bold; color: rgb(61, 64, 70); top: 494.3px;">23</span>
<div class="a" style="left:113.200px;top:491.90px;width:15px;height:9.200px;background:#fcfcfc;border:0.5px solid #8d9299;box-sizing:border-box"></div>
<div class="a" style="left:115px;top:493.50px;width:7px;height:1.500px;background:#999"></div>
<div class="a" style="left:115.500px;top:496.00px;width:6px;height:0.6px;background:#999;box-shadow:0 1.300px 0 #aaa,4px 0.6px 0 #bbb"></div>
<div class="a" style="left:220.300px;top:182.500px;width:615.400px;height:318px;background:#fff"></div>
<svg style="left:0;top:0" width="1024" height="575" viewBox="0 0 1024 575"><defs><clipPath id="cs"><rect x="220.300" y="182.500" width="615.400" height="318"></rect></clipPath></defs>
<g clip-path="url(#cs)" fill="none" stroke="#e8805a" stroke-width="0.6">
<path d="M675.7 185.7 C691.6 193.5 710.8 197.8 733.0 183.0 M679.0 189.0 C694.7 196.4 714.3 199.3 733.0 183.0 M682.3 192.3 C697.8 199.0 717.9 200.9 733.0 183.0 M685.6 195.6 C701.0 201.5 721.4 202.4 733.0 183.0 M688.9 198.9 C704.1 203.8 725.0 204.0 733.0 183.0 M692.2 202.2 C707.2 206.0 728.5 205.5 733.0 183.0 M695.6 205.6 C710.4 208.1 732.0 207.0 733.0 183.0 M698.9 208.9 C713.5 210.1 735.6 208.6 733.0 183.0 M702.2 212.2 C716.7 212.0 739.1 210.1 733.0 183.0 M705.5 215.5 C719.8 213.9 742.7 211.7 733.0 183.0 M708.8 218.8 C722.9 215.6 746.2 213.2 733.0 183.0 M712.2 222.2 C726.1 217.3 749.8 214.8 733.0 183.0 M715.5 225.5 C729.2 218.9 753.3 216.3 733.0 183.0 M718.8 228.8 C732.3 220.5 756.9 217.9 733.0 183.0 M722.1 232.1 C735.5 221.9 760.4 219.4 733.0 183.0 M725.4 235.4 C738.6 223.3 764.0 221.0 733.0 183.0 M728.8 238.8 C741.8 224.7 767.5 222.5 733.0 183.0 M732.1 242.1 C744.9 225.9 771.0 224.0 733.0 183.0 M735.4 245.4 C748.0 227.2 774.6 225.6 733.0 183.0 M738.7 248.7 C751.2 228.3 778.1 227.1 733.0 183.0 M742.0 252.0 C754.3 229.4 781.7 228.7 733.0 183.0 M745.3 255.3 C757.4 230.5 785.2 230.2 733.0 183.0 M737.0 183 C774.0 219.0 774.0 233.0 750.0 257.0 C813.6 262.0 810.5 360.0 836.5 352.0 M742.4 183 C777.6 219.0 779.2 232.9 756.9 257.4 C811.0 264.9 811.8 354.6 836.5 347.0 M747.9 183 C781.1 219.0 782.7 232.8 762.0 257.9 C808.8 267.6 813.2 349.1 836.5 342.0 M753.3 183 C784.7 219.0 785.6 232.7 766.6 258.3 C807.0 269.9 814.5 343.7 836.5 337.0 M758.8 183 C788.2 219.0 788.3 232.6 770.9 258.8 C805.6 271.9 815.8 338.2 836.5 332.0 M764.2 183 C791.8 219.0 790.8 232.4 775.0 259.2 C804.6 273.6 817.2 332.8 836.5 327.0 M769.7 183 C795.3 219.0 793.2 232.3 778.9 259.7 C804.0 275.1 818.5 327.3 836.5 322.0 M775.1 183 C798.9 219.0 795.5 232.2 782.7 260.1 C803.8 276.2 819.8 321.9 836.5 317.0 M780.6 183 C802.4 219.0 797.8 232.1 786.4 260.6 C803.9 277.0 821.2 316.4 836.5 312.0 M786.0 183 C806.0 219.0 799.9 232.0 790.0 261.0 C804.3 277.5 822.5 311.0 836.5 307.0 M791.4 183 C809.6 219.0 803.1 231.2 794.6 260.8 C805.7 277.2 823.8 305.6 836.5 302.0 M796.9 183 C813.1 219.0 806.3 230.4 799.1 260.6 C807.6 276.7 825.2 300.1 836.5 297.0 M802.3 183 C816.7 219.0 809.6 229.7 803.7 260.3 C809.9 275.9 826.5 294.7 836.5 292.0 M807.8 183 C820.2 219.0 812.9 228.9 808.2 260.1 C812.7 274.8 827.8 289.2 836.5 287.0 M813.2 183 C823.8 219.0 816.3 228.1 812.8 259.9 C816.0 273.5 829.2 283.8 836.5 282.0 M818.7 183 C827.3 219.0 819.8 227.3 817.3 259.7 C819.8 271.9 830.5 278.3 836.5 277.0 M824.1 183 C830.9 219.0 823.4 226.6 821.9 259.4 C824.0 270.0 831.8 272.9 836.5 272.0 M829.6 183 C834.4 219.0 827.1 225.8 826.4 259.2 C828.8 267.9 833.2 267.4 836.5 267.0 M835.0 183 C838.0 219.0 831.0 225.0 831.0 259.0 C834.0 265.5 834.5 262.0 836.5 262.0"></path>
<path d="M220.0 394.0 Q223.7 393.3 226.2 397.0 M220.0 398.3 Q224.3 397.6 227.1 401.5 M220.0 402.6 Q224.9 401.9 228.1 405.9 M220.0 406.9 Q225.5 406.3 229.2 410.4 M220.0 411.2 Q226.3 410.6 230.4 414.9 M220.0 415.5 Q227.1 414.9 231.8 419.4 M220.0 419.8 Q227.9 419.2 233.2 423.8 M220.0 424.1 Q228.9 423.5 234.8 428.3 M220.0 428.4 Q230.0 427.8 236.6 432.8 M220.0 432.7 Q231.1 432.2 238.6 437.2 M220.0 437.0 Q232.4 436.6 240.8 441.7 M220.0 441.3 Q233.7 441.1 243.2 446.2 M220.0 445.6 Q235.1 445.6 246.0 450.7 M220.0 449.9 Q236.6 450.2 249.1 455.1 M220.0 454.2 Q238.2 454.9 252.7 459.6 M220.0 458.5 Q240.1 459.7 256.8 464.1 M220.0 462.8 Q242.1 464.5 261.5 468.6 M220.0 467.1 Q244.4 469.3 267.1 473.0 M220.0 471.4 Q247.1 474.1 273.7 477.5 M220.0 475.7 Q250.3 478.9 281.7 482.0 M220.0 480.0 Q254.4 483.8 291.6 486.4 M220.0 485.5 Q259.4 488.9 304.4 490.9 M220.0 491.0 Q261.9 491.7 311.8 493.0 M220.0 496.5 Q264.4 493.8 318.3 494.6 M220.0 502.0 Q266.8 495.5 324.1 495.8 M220.0 507.5 Q269.1 496.9 329.0 496.8 M220.0 513.0 Q271.0 498.1 333.4 497.6 M220.0 518.5 Q272.7 499.2 337.1 498.2 M222.0 503.0 Q272.4 494.9 313.6 493.4 M231.5 503.0 Q279.4 495.8 318.6 494.3 M241.0 503.0 Q286.5 496.6 323.8 495.1 M250.5 503.0 Q293.7 497.4 329.0 495.9 M260.0 503.0 Q300.9 498.2 334.3 496.7 M269.5 503.0 Q308.1 498.9 339.8 497.4 M279.0 503.0 Q315.5 499.6 345.3 498.1 M288.5 503.0 Q322.8 500.2 350.9 498.7 M298.0 503.0 Q330.3 500.9 356.7 499.4 M307.5 503.0 Q337.8 501.4 362.5 499.9 M317.0 503.0 Q345.3 502.0 368.5 500.5 M326.5 503.0 Q352.9 502.5 374.5 501.0"></path>
</g></svg>
<div class="a" style="left:255.300px;top:188.700px;width:318.700px;height:61.800px;background:#fcb75c;border-radius:4.500px"></div>
<span class="t" style="left: 267px; font-size: 15px; font-weight: bold; color: rgb(18, 15, 12); -webkit-text-stroke: 0.25px rgb(18, 15, 12); top: 198.2px; transform: scaleX(0.95);">OKUL PSIKOSOSYAL KORUMA, ÖNLEME</span>
<span class="t" style="left: 267px; font-size: 15px; font-weight: bold; color: rgb(18, 15, 12); -webkit-text-stroke: 0.25px rgb(18, 15, 12); top: 219.2px; transform: scaleX(0.973);">VE KRIZE MÜDAHALE EKIBI NE YAPAR?</span>
<div class="a" style="left:270.100px;top:267.3px;width:258.400px;height:24.6px;background:#f9d5c6"></div>
<div class="a" style="left:278.600px;top:271.4px;width:10.100px;height:9.800px;background:#f9ae86"></div>
<div class="a" style="left:270.100px;top:308.9px;width:258.400px;height:31.7px;background:#efc6b8"></div>
<div class="a" style="left:278.600px;top:319.8px;width:10.100px;height:9.800px;background:#e39875"></div>
<div class="a" style="left:270.100px;top:357.3px;width:258.400px;height:30.9px;background:#f6e3a6"></div>
<div class="a" style="left:278.600px;top:368.2px;width:10.100px;height:9.800px;background:#e9c762"></div>
<div class="a" style="left:270.100px;top:405.7px;width:258.400px;height:30.9px;background:#cadcc6"></div>
<div class="a" style="left:278.600px;top:416.6px;width:10.100px;height:9.800px;background:#aabe9f"></div>
<div class="a" style="left:270.100px;top:453.8px;width:258.400px;height:24.4px;background:#b6ced4"></div>
<div class="a" style="left:278.600px;top:465.3px;width:10.100px;height:9.800px;background:#9aadb2"></div>
<span class="t" style="left: 294.2px; font-size: 11px; color: rgb(30, 30, 30); top: 270.09px; transform: scaleX(0.935);">Yılda en az 3 toplantı yapar</span>
<span class="t" style="left: 294.2px; font-size: 11px; color: rgb(30, 30, 30); top: 309.49px; transform: scaleX(0.95);">Travmatik bir olay sonrası gözlem</span>
<span class="t" style="left: 294.2px; font-size: 11px; color: rgb(30, 30, 30); top: 323.59px; transform: scaleX(1);">formunu doldurur</span>
<span class="t" style="left: 293.9px; font-size: 9px; color: rgb(30, 30, 30); top: 355.18px; transform: scaleX(1.041);">İhtiyaç halinde ilçe ekibinden destek ister (İhtiyaç</span>
<span class="t" style="left: 293.9px; font-size: 9px; color: rgb(30, 30, 30); top: 366.68px; transform: scaleX(1.011);">olmayan süreçte de İlçe MEM şube müdürüne bilgi notu</span>
<span class="t" style="left: 293.9px; font-size: 9px; color: rgb(30, 30, 30); top: 376.58px; transform: scaleX(1.166);">verilmesi)</span>
<span class="t" style="left: 293.4px; font-size: 11px; color: rgb(30, 30, 30); top: 412.39px; transform: scaleX(0.933);">Çalışma sonrası rapor hazırlar ve gönderir</span>
<span class="t" style="left: 293.4px; font-size: 11px; color: rgb(30, 30, 30); top: 451.19px; transform: scaleX(0.925);">Çalışmalar sonrası izleme ve değerlendirmeyi</span>
<span class="t" style="left: 293.4px; font-size: 11px; color: rgb(30, 30, 30); top: 465.69px; transform: scaleX(1.001);">yapar.</span>
<svg style="left:0;top:0" width="1024" height="575" viewBox="0 0 1024 575"><g clip-path="url(#cs)" fill="none" stroke="#0c0c0c" stroke-width="2.800" stroke-linecap="round" stroke-linejoin="round">
<g><path d="M 534.9 318.5 C 545 319.5 553 318.5 558 315.5 C 566 310 570.5 300 569 293 C 567.5 286 562 283.5 558 284.5 C 552 286 550.5 292 552.5 298 C 555 305 560 310 566 313 C 574 316.5 586 315 597 309.5"></path><path d="M 586.500 306 L 598 308.800 L 593.400 320.300"></path></g>
<g transform="translate(0 57.300)"><path d="M 534.6 318.6 C 545 319.8 553 318.8 558 316 C 566 310.5 570.8 300 569.5 293 C 568 286 562.500 283.8 558.500 284.6 C 552.500 286 551 292 553 298 C 555.500 305 560.500 310.500 566.500 313.500 C 574.500 317 587 317.500 599 314"></path><path d="M 588 307.800 L 600.300 313.800 L 594 324.800"></path></g>
<g><path d="M 531.8 426.8 C 541 428 549 427 554.5 424 C 562 419.5 569.5 411 568.5 404 C 567.5 398 562 395.3 557.5 396 C 551.5 397.5 548.5 403 550.3 409 C 552.5 416 558 421.5 564 424 C 572 427.5 584 428 593.5 426.3"></path><path d="M 583 418.300 L 594.500 426 L 587.500 437"></path></g>
<g transform="translate(-0.800 51.800)"><path d="M 531.8 426.8 C 541 428 549 427 554.5 424 C 562 419.5 569.5 411 568.5 404 C 567.5 398 562 395.3 557.5 396 C 551.5 397.5 548.5 403 550.3 409 C 552.5 416 558 421.5 564 424 C 572 427.5 584 428 593.5 426.3"></path><path d="M 583 418.300 L 594.500 426 L 587.500 437"></path></g>
</g>
<g clip-path="url(#cs)" fill="#fff" stroke-width="4.300">
<path d="M807.100 302.7 V364.4" stroke="#c4db8f" fill="none" stroke-width="3.800"></path>
<path d="M807.100 364.4 V426.7" stroke="#f4773c" fill="none" stroke-width="3.800"></path>
<path d="M807.100 426.7 V488.9" stroke="#f2e360" fill="none" stroke-width="3.800"></path>
<rect x="603.700" y="272.05" width="190" height="49.30" rx="9.500" stroke="#7fb5e3"></rect>
<circle cx="793.600" cy="296.7" r="14.200" stroke="#7fb5e3"></circle>
<rect x="603.700" y="334.30" width="190" height="49.30" rx="9.500" stroke="#c4db8f"></rect>
<circle cx="793.600" cy="358.9" r="14.200" stroke="#c4db8f"></circle>
<rect x="603.700" y="396.55" width="190" height="49.30" rx="9.500" stroke="#f4773c"></rect>
<circle cx="793.600" cy="421.2" r="14.200" stroke="#f4773c"></circle>
<rect x="603.700" y="458.80" width="190" height="49.30" rx="9.500" stroke="#f2e360"></rect>
<circle cx="793.600" cy="483.4" r="14.200" stroke="#f2e360"></circle>
</g></svg>
<span class="t" style="left: 615px; font-size: 10.7px; color: rgb(43, 43, 43); white-space: pre; top: 278.44px; transform: scaleX(0.919);">Psikososyal Koruma, Önleme ve</span>
<span class="t" style="left: 615px; font-size: 10.7px; color: rgb(43, 43, 43); white-space: pre; top: 290.44px; transform: scaleX(0.962);">Krize Müdahale Hizmetleri Gözlem</span>
<span class="t" style="left: 615px; font-size: 10.7px; color: rgb(43, 43, 43); white-space: pre; top: 302.24px; transform: scaleX(0.989);">Formu" nu (EK-1) doldurur.</span>
<span class="t" style="left: 615px; font-size: 10.7px; color: rgb(43, 43, 43); white-space: pre; top: 340.44px; transform: scaleX(0.911);">Psikososyal Koruma, Önleme ve Krize</span>
<span class="t" style="left: 615px; font-size: 10.7px; color: rgb(43, 43, 43); white-space: pre; top: 352.54px; transform: scaleX(0.937);">Müdahale Hizmetleri Destek Talep</span>
<span class="t" style="left: 615px; font-size: 10.7px; color: rgb(43, 43, 43); white-space: pre; top: 364.64px; transform: scaleX(0.945);">Formu" nu (EK-2) doldurur</span>
<span class="t" style="left: 615px; font-size: 10.7px; color: rgb(43, 43, 43); white-space: pre; top: 400.44px; transform: scaleX(0.949);">Psikososyal Koruma, Önleme  ve</span>
<span class="t" style="left: 615px; font-size: 10.7px; color: rgb(43, 43, 43); white-space: pre; top: 412.54px; transform: scaleX(0.945);">Krize Müdahale Hizmetleri  Çalışma</span>
<span class="t" style="left: 615px; font-size: 10.7px; color: rgb(43, 43, 43); white-space: pre; top: 424.74px; transform: scaleX(0.996);">Raporu'nu (EK-3) doldurur</span>
<span class="t" style="left: 615px; font-size: 10.7px; color: rgb(43, 43, 43); white-space: pre; top: 461.24px; transform: scaleX(0.949);">Psikososyal Koruma, Önleme  ve</span>
<span class="t" style="left: 615px; font-size: 10.7px; color: rgb(43, 43, 43); white-space: pre; top: 473.44px; transform: scaleX(0.966);">Krize Müdahale Hizmetleri  İzleme</span>
<span class="t" style="left: 615px; font-size: 10.7px; color: rgb(43, 43, 43); white-space: pre; top: 485.74px; transform: scaleX(0.98);">Formu"nu  (EK-4) doldurur</span>
<div class="a" style="left:913.200px;top:177.500px;width:8.800px;height:323px;background:#dfe2e6"></div>
<div class="a" style="left:915.300px;top:181px;width:0;height:0;border-left:2.300px solid transparent;border-right:2.300px solid transparent;border-bottom:2.800px solid #33363b"></div>
<div class="a" style="left:913.500px;top:238.500px;width:8.200px;height:7.800px;background:#eef0f3;border:0.6px solid #aeb2b8;box-sizing:border-box;border-radius:1px"></div>
<div class="a" style="left:916px;top:241.300px;width:3.200px;height:0.6px;background:#8a8f98;box-shadow:0 1.200px 0 #8a8f98,0 2.400px 0 #8a8f98"></div>
<div class="a" style="left:915.300px;top:479px;width:0;height:0;border-left:2.300px solid transparent;border-right:2.300px solid transparent;border-top:2.800px solid #787d85"></div>
<svg style="left:915.300px;top:487.300px" width="4.600" height="5.400" viewBox="0 0 4.600 5.400"><path d="M0 2.600 L2.300 0 L4.600 2.600Z M0 5.400 L2.300 2.800 L4.600 5.400Z" fill="#26282c"></path></svg>
<svg style="left:915.300px;top:495.500px" width="4.600" height="5.400" viewBox="0 0 4.600 5.400"><path d="M0 0 L2.300 2.600 L4.600 0Z M0 2.800 L2.300 5.400 L4.600 2.800Z" fill="#26282c"></path></svg>


<!-- ===== zoom toolbar ===== -->
<div class="a" style="left:0;top:500.800px;width:1024px;height:44.200px;background:#000"></div>
<!-- Ses -->
<svg style="left:28px;top:507px" width="22" height="21" viewBox="28 507 22 21" fill="none">
 <rect x="35.800" y="509.200" width="6.400" height="10.800" rx="3.200" stroke="#e8e8e8" stroke-width="1.200"></rect>
 <path d="M33 516.500 Q33 522.600 39 522.600 Q45 522.600 45 516.500 M39 522.600 V525.800 M35.800 525.800 H42.200" stroke="#e8e8e8" stroke-width="1.200" stroke-linecap="round"></path>
 <path d="M30.200 525.800 L47.800 508.800" stroke="#000" stroke-width="3.400"></path>
 <path d="M30.200 525.800 L47.800 508.800" stroke="#e0335c" stroke-width="1.700" stroke-linecap="round"></path>
</svg>
<svg style="left:59.300px;top:515.500px" width="7" height="4.500" viewBox="0 0 7 4.500"><path d="M0.7 3.800 L3.500 1 L6.300 3.800" fill="none" stroke="#e6e6e6" stroke-width="1.200"></path></svg>
<span class="t zl" style="left: 32.2px; top: 529.27px; transform: scaleX(0.828);">Ses</span>
<!-- Video -->
<svg style="left:98px;top:507px" width="22" height="21" viewBox="98 507 22 21" fill="none">
 <rect x="100.400" y="512.600" width="11.600" height="9.400" rx="1.800" stroke="#e8e8e8" stroke-width="1.200"></rect>
 <path d="M112.500 516 L117.500 513.200 V521.400 L112.500 518.600" stroke="#e8e8e8" stroke-width="1.200" stroke-linejoin="round"></path>
 <path d="M100 525.800 L117 508.800" stroke="#000" stroke-width="3.400"></path>
 <path d="M100 525.800 L117 508.800" stroke="#e0335c" stroke-width="1.700" stroke-linecap="round"></path>
</svg>
<span class="t zl" style="left: 97px; top: 529.27px; transform: scaleX(0.923);">Video</span>
<!-- Katilimcilar -->
<svg style="left:343px;top:511px" width="15" height="14" viewBox="343 511 15 14" fill="none" stroke="#e8e8e8" stroke-width="1.200">
 <circle cx="348.300" cy="514.400" r="2.300"></circle><circle cx="354.600" cy="516.300" r="1.700"></circle>
 <path d="M344 523.600 Q344 519 348.300 519 Q352.400 519 352.400 523.600Z" stroke-linejoin="round"></path>
 <path d="M352.600 520 Q357.400 519.600 357.200 523.600 H353" stroke-linecap="round"></path>
</svg>
<span class="t" style="left: 362.5px; font-size: 8.6px; color: rgb(230, 230, 230); top: 511.62px; transform: scaleX(0.92);">73</span>
<svg style="left:386.300px;top:515.500px" width="7" height="4.500" viewBox="0 0 7 4.500"><path d="M0.7 3.800 L3.500 1 L6.300 3.800" fill="none" stroke="#e6e6e6" stroke-width="1.200"></path></svg>
<span class="t zl" style="left: 327.7px; top: 529.27px; transform: scaleX(0.923);">Katılımcılar</span>
<!-- Sohbet -->
<svg style="left:423px;top:509px" width="25" height="18" viewBox="423 509 25 18" fill="none">
 <path d="M427.500 512.600 H433.500 Q436.500 512.600 436.500 515.600 V519 Q436.500 522 433.500 522 H431 L428.400 524.400 V522 H427.500 Q424.600 522 424.600 519 V515.600 Q424.600 512.600 427.500 512.600Z" stroke="#e8e8e8" stroke-width="1.200" stroke-linejoin="round"></path>
 <path d="M433 510.600 H435.500 Q438.500 510.600 438.500 513.600 V518" stroke="#e8e8e8" stroke-width="1.200"></path>
 <circle cx="427.800" cy="517.300" r="0.800" fill="#fff"></circle><circle cx="430.500" cy="517.300" r="0.800" fill="#fff"></circle><circle cx="433.200" cy="517.300" r="0.800" fill="#fff"></circle>
 <circle cx="441.500" cy="512.600" r="5.600" fill="#e8454b" stroke="#000" stroke-width="0.8"></circle>
</svg>
<span class="t" style="left: 439.4px; font-size: 7.6px; color: rgb(255, 255, 255); top: 508.97px;">3</span>
<svg style="left:453.700px;top:515.500px" width="7" height="4.500" viewBox="0 0 7 4.500"><path d="M0.7 3.800 L3.500 1 L6.300 3.800" fill="none" stroke="#e6e6e6" stroke-width="1.200"></path></svg>
<span class="t zl" style="left: 418.7px; top: 529.27px; transform: scaleX(0.924);">Sohbet</span>
<!-- Tepki ver -->
<svg style="left:486px;top:509.500px" width="20" height="16" viewBox="486 509.500 20 16" fill="none"><path d="M496 524 C492 521.500 487.700 518.500 487.700 515 C487.700 512.300 489.800 511.200 491.500 511.200 C493.500 511.200 495 512.300 496 514 C497 512.300 498.500 511.200 500.500 511.200 C502.200 511.200 504.300 512.300 504.300 515 C504.300 518.500 500 521.500 496 524Z" stroke="#e8e8e8" stroke-width="1.200" stroke-linejoin="round"></path></svg>
<span class="t zl" style="left: 478.6px; top: 529.27px; transform: scaleX(0.917);">Tepki ver</span>
<!-- Paylas -->
<div class="a" style="left:553.800px;top:510.200px;width:18px;height:14.500px;background:#24d76c;border-radius:2.500px"></div>
<svg style="left:558.300px;top:512.800px" width="9" height="9.500" viewBox="0 0 9 9.500"><path d="M4.500 8.800 V2.200 M1.300 4.800 L4.500 1.500 L7.700 4.800" fill="none" stroke="#000" stroke-width="1.800" stroke-linejoin="miter"></path></svg>
<span class="t zl" style="left: 550.5px; top: 529.27px; transform: scaleX(0.861);">Paylaş</span>
<!-- Toplanti bilgileri -->
<svg style="left:627.500px;top:507.500px" width="19.500" height="19.500" viewBox="0 0 19.500 19.500"><circle cx="9.750" cy="9.750" r="8.300" fill="none" stroke="#e8e8e8" stroke-width="1.200"></circle><circle cx="9.750" cy="5.800" r="1.100" fill="#fff"></circle><path d="M8.200 8.600 H10.300 V13.800 M8 13.900 H12" fill="none" stroke="#fff" stroke-width="1.300"></path></svg>
<span class="t zl" style="left: 606.4px; top: 529.27px; transform: scaleX(0.954);">Toplantı bilgileri</span>
<!-- Uygulamalar -->
<svg style="left:697px;top:509px" width="19" height="18" viewBox="697 509 19 18" fill="none" stroke="#e8e8e8" stroke-width="1.300" stroke-linecap="round">
 <circle cx="710.800" cy="512.600" r="2.700"></circle><circle cx="701.600" cy="522" r="2.700"></circle>
 <path d="M698.800 516 V513.500 Q698.800 510.500 701.800 510.500 H704.500"></path>
 <path d="M713.800 518.500 V521 Q713.800 524.200 710.800 524.200 H708"></path>
</svg>
<span class="t zl" style="left: 681.6px; top: 529.27px; transform: scaleX(0.925);">Uygulamalar</span>
<!-- Daha fazla -->
<svg style="left:759.250px;top:507.500px" width="19.500" height="19.500" viewBox="0 0 19.500 19.500"><circle cx="9.750" cy="9.750" r="8.300" fill="none" stroke="#e8e8e8" stroke-width="1.200"></circle><circle cx="6" cy="9.750" r="1" fill="#fff"></circle><circle cx="9.750" cy="9.750" r="1" fill="#fff"></circle><circle cx="13.500" cy="9.750" r="1" fill="#fff"></circle></svg>
<span class="t zl" style="left: 748.6px; top: 529.27px; transform: scaleX(0.902);">Daha fazla</span>
<!-- Ayril -->
<svg style="left:979px;top:507px" width="20" height="21" viewBox="979 507 20 21" fill="none">
 <path d="M987.500 510.800 L996 509 V525.600 L989.300 524.400 M996 509 L997.200 510.500 V524.500 L996 525.600" stroke="#d5305c" stroke-width="1.200" stroke-linejoin="round"></path>
 <circle cx="987.600" cy="512" r="1.700" stroke="#f0f0f0" stroke-width="1.100"></circle>
 <path d="M984.800 516.300 L987.800 514.800 L990.300 517.500 L992 518.600 M987.300 515.300 L986.300 520.200 L989.300 522.400 L989.800 526 M986.300 520.200 L984.600 523.200 L981.600 526 M984.800 516.300 L983.500 519.300" stroke="#f0f0f0" stroke-width="1.700" stroke-linecap="round" stroke-linejoin="round"></path>
</svg>
<span class="t zl" style="left: 979.7px; top: 529.27px; transform: scaleX(0.899);">Ayrıl</span>

<!-- ===== windows taskbar ===== -->
<div class="a" style="left:0;top:545px;width:1024px;height:30px;background:#414141"></div>
<div class="a" style="left:0;top:545px;width:36.500px;height:30px;background:#3b3b3b"></div>
<svg style="left:11.700px;top:554px" width="12.700" height="12.400" viewBox="0 0 127 124"><path d="M0 16 L52 9 V58 H0Z M60 8 L127 0 V58 H60Z M0 66 H52 V115 L0 108Z M60 66 H127 V124 L60 116Z" fill="#fff"></path></svg>
<div class="a" style="left:36.500px;top:545.500px;width:215.500px;height:28px;background:#f3f3f3;border-radius:1px"></div>
<svg style="left:44.500px;top:554px" width="13" height="12.500" viewBox="0 0 13 12.500"><circle cx="8" cy="4.900" r="3.900" fill="none" stroke="#3a3a3a" stroke-width="1.100"></circle><path d="M5.200 7.800 L0.800 12" stroke="#3a3a3a" stroke-width="1.200" stroke-linecap="round"></path></svg>
<span class="t" style="left: 66.4px; font-size: 11.2px; color: rgb(60, 60, 60); top: 555.32px; transform: scaleX(0.953);">Ara</span>
<!-- flamingo art -->
<div class="a" style="left:196px;top:568px;width:56px;height:4px;background:linear-gradient(90deg,rgba(248,198,150,0),#f6c08c 30%,#f3b98a)"></div>
<div class="a" style="left:193px;top:571.500px;width:59px;height:2.500px;background:linear-gradient(90deg,rgba(80,200,190,0),#3fc9b6 25%,#35c2b5)"></div>
<svg style="left:200px;top:546px" width="50" height="27" viewBox="200 546 50 27" fill="none">
 <path d="M206.500 560.500 C209 557 216 557.500 219.500 560.500 C217 564.500 210 565 206.500 560.500Z" fill="#ef6f9f"></path>
 <path d="M208 560 C208 555 204 553 205 549.500 C205.600 547.500 208.500 547.300 209.300 549.300" stroke="#ef6f9f" stroke-width="1.600" stroke-linecap="round"></path>
 <path d="M203 550.500 L205.200 549.300 L205.200 551Z" fill="#444"></path>
 <path d="M211.500 564 L208 571.500 M214 564 L216.500 571.500" stroke="#e8608f" stroke-width="0.8"></path>
 <ellipse cx="229.500" cy="563.500" rx="4.500" ry="3" fill="#b9bfd6"></ellipse>
 <path d="M226.500 562.500 C226.500 558.500 225 557.500 224.500 556.200" stroke="#aab0ca" stroke-width="1.300" stroke-linecap="round"></path>
 <path d="M229 566 L228 571.500 M231 566 L232.500 571.500" stroke="#8f96b5" stroke-width="0.7"></path>
 <ellipse cx="242.500" cy="565" rx="4" ry="2.700" fill="#c3c8dc"></ellipse>
 <path d="M240 564 C240 560.500 238.800 559.800 238.300 558.800" stroke="#b3b9d0" stroke-width="1.200" stroke-linecap="round"></path>
 <path d="M242 567.500 L241.500 571.500 M244 567.500 L245 571.500" stroke="#8f96b5" stroke-width="0.7"></path>
</svg>
<!-- explorer -->
<svg style="left:263.500px;top:552.500px" width="17" height="14" viewBox="0 0 17 14"><path d="M0.5 1.500 Q0.500 0.5 1.500 0.5 H6 L7.500 2 H15.500 Q16.500 2 16.500 3 V12.500 Q16.500 13.500 15.500 13.500 H1.500 Q0.500 13.500 0.500 12.500Z" fill="#f6c445"></path><rect x="0.5" y="4" width="16" height="9.500" rx="0.8" fill="#fbd96a"></rect><rect x="4.500" y="8.500" width="8" height="5" fill="#4a8fd6"></rect><rect x="6.500" y="10.500" width="4" height="3" fill="#fbd96a"></rect></svg>
<!-- copilot -->
<svg style="left:300px;top:551.500px" width="17.500" height="16.500" viewBox="0 0 17.500 16.500"><defs><linearGradient id="cp1" x1="0" y1="0" x2="1" y2="1"><stop offset="0" stop-color="#3aa0f0"></stop><stop offset=".5" stop-color="#8b6fe8"></stop><stop offset="1" stop-color="#e8508f"></stop></linearGradient><linearGradient id="cp2" x1="0" y1="1" x2="1" y2="0"><stop offset="0" stop-color="#f5b53a"></stop><stop offset=".5" stop-color="#ef6f4a"></stop><stop offset="1" stop-color="#d957a8"></stop></linearGradient></defs>
 <path d="M6 1 H11.500 Q14 1 14.800 3.500 L17 10 Q17.500 12 15.500 12 H12 L10 5 Q9.300 3 7.500 3 H4 Q5 1 6 1Z" fill="url(#cp1)"></path>
 <path d="M11.500 15.500 H6 Q3.500 15.500 2.700 13 L0.500 6.500 Q0 4.500 2 4.500 H5.500 L7.500 11.500 Q8.200 13.500 10 13.500 H13.500 Q12.500 15.500 11.500 15.500Z" fill="url(#cp2)"></path>
 <path d="M5.500 4.500 H9.800 L12 12 H8 Z" fill="#7ad0c0" opacity=".75"></path>
</svg>
<!-- edge -->
<svg style="left:336px;top:550.500px" width="19" height="19" viewBox="0 0 19 19"><defs><linearGradient id="eg1" x1="0" y1="0" x2="1" y2="1"><stop offset="0" stop-color="#36c8a8"></stop><stop offset="1" stop-color="#1d7fd8"></stop></linearGradient></defs><circle cx="9.500" cy="9.500" r="9.200" fill="url(#eg1)"></circle><path d="M1 11 C2 4.500 8 2.500 12 4 C16 5.500 18.500 9 18.300 11.500 C17 8.500 13 7.500 10.500 9 C8 10.500 8 14 11 16 C5 17.500 0.500 15 1 11Z" fill="#1463b8"></path><path d="M10.500 9 C13 7.500 17 8.500 18.300 11.500 C18 14 15.500 14.500 13.500 14 C11.500 13.500 10 11 10.500 9Z" fill="#414141"></path><path d="M2 7 C5 1.500 13 1 17 6 C13 3.500 6 3.500 2 7Z" fill="#5fe0b0" opacity=".8"></path></svg>
<div class="a" style="left:330px;top:573px;width:31px;height:2px;background:#9fd0f0"></div>
<!-- store -->
<svg style="left:372.500px;top:551px" width="20.500" height="18" viewBox="0 0 20.500 18"><path d="M6 4 V2.200 Q6 0.8 7.400 0.800 H13 Q14.400 0.800 14.400 2.200 V4" fill="none" stroke="#3a8fd0" stroke-width="1.300"></path><path d="M0.800 4 H19.700 V15 Q19.700 17.300 17.400 17.300 H3.100 Q0.800 17.300 0.800 15Z" fill="#f1f1f1"></path><rect x="6" y="7" width="3.700" height="3.700" fill="#f25022"></rect><rect x="10.700" y="7" width="3.700" height="3.700" fill="#7fba00"></rect><rect x="6" y="11.600" width="3.700" height="3.700" fill="#00a4ef"></rect><rect x="10.700" y="11.600" width="3.700" height="3.700" fill="#ffb900"></rect></svg>
<!-- mail -->
<svg style="left:409.500px;top:551.500px" width="19" height="17" viewBox="0 0 19 17"><path d="M0.5 6 L9.500 0.3 L18.500 6 V16.500 H0.5Z" fill="#1f8fd8"></path><path d="M0.5 6.500 H18.500 V16.500 H0.5Z" fill="#3aa8ea"></path><path d="M0.5 6.500 L9.500 12.500 L18.500 6.500 V8 L9.500 14 L0.500 8Z" fill="#8fd3f8"></path><path d="M0.5 16.500 L9.500 10.500 L18.500 16.500Z" fill="#2b98e0"></path></svg>
<!-- zoom app -->
<div class="a" style="left:438px;top:545px;width:33.500px;height:30px;background:#5b5b5b"></div>
<div class="a" style="left:446.300px;top:550px;width:19px;height:19px;border-radius:9.500px;background:#1a5ae0"></div>
<span class="t" style="left: 449.3px; font-size: 9.5px; font-weight: bold; color: rgb(255, 255, 255); letter-spacing: -0.3px; top: 554.76px; transform: scaleX(1.031);">zm</span>
<div class="a" style="left:438px;top:573px;width:33.500px;height:2px;background:#a8d8f5"></div>
<div class="a" style="left:471.500px;top:545px;width:1px;height:30px;background:#4c4c4c"></div>
<!-- chrome -->
<svg style="left:482.800px;top:550px" width="19" height="19" viewBox="-9.500 -9.500 19 19"><circle r="9.400" fill="#fff"></circle><path d="M0 0 L-8.140 -4.700 A9.400 9.400 0 0 1 8.140 -4.700Z" fill="#e94335"></path><path d="M0 0 L8.140 -4.700 A9.400 9.400 0 0 1 0 9.400Z" fill="#fbbc05"></path><path d="M0 0 L0 9.400 A9.400 9.400 0 0 1 -8.140 -4.700Z" fill="#34a853"></path><path d="M-4 -4.700 H8.140 L4 2.300Z" fill="#e94335"></path><path d="M4.100 -2.300 L8.140 -4.700 A9.400 9.400 0 0 1 0 9.400 L4 2.300Z" fill="#fbbc05"></path><circle r="4.300" fill="#fff"></circle><circle r="3.300" fill="#4285f4"></circle></svg>
<div class="a" style="left:477px;top:573px;width:31px;height:2px;background:#9fd0f0"></div>
<!-- word -->
<svg style="left:520.500px;top:552px" width="17.500" height="16" viewBox="0 0 17.500 16"><rect x="6" y="1" width="11" height="14" rx="0.8" fill="#fdfdfd"></rect><path d="M11 3.500 H15.500 M11 6 H15.500 M11 8.500 H15.500 M11 11 H15.500 M11 13 H15.500" stroke="#3b6fc2" stroke-width="0.9"></path><path d="M0 1.800 L10 0 V16 L0 14.200Z" fill="#2b5fb5"></path><path d="M2.200 5 L3.500 11 L5 6.500 L6.500 11 L7.800 5" fill="none" stroke="#fff" stroke-width="1.100" stroke-linejoin="round"></path></svg>
<div class="a" style="left:514.400px;top:573px;width:29.600px;height:2px;background:#9fd0f0"></div>
<!-- tray -->
<div class="a" style="left:785.800px;top:552.600px;width:14.400px;height:14.400px;border-radius:50%;background:radial-gradient(circle at 40% 40%,#fbb53a,#f29a1c)"></div>
<div class="a" style="left:794.500px;top:551.500px;width:7.400px;height:7.400px;border-radius:50%;background:#e03a30"></div>
<span class="t" style="left: 797px; font-size: 5.5px; font-weight: bold; color: rgb(255, 255, 255); top: 552.64px;">1</span>
<span class="t" style="left: 809px; font-size: 11.4px; color: rgb(242, 242, 242); top: 554.55px; transform: scaleX(0.845);">25°C</span>
<span class="t" style="left: 837.2px; font-size: 11.4px; color: rgb(242, 242, 242); top: 554.55px; transform: scaleX(0.893);">Güneşli</span>
<svg style="left:889.600px;top:557px" width="9.500" height="6" viewBox="0 0 9.500 6"><path d="M0.7 5.300 L4.750 1 L8.800 5.300" fill="none" stroke="#f0f0f0" stroke-width="1.100"></path></svg>
<svg style="left:905.500px;top:555px" width="12" height="10.500" viewBox="0 0 12 10.500" fill="none" stroke="#f0f0f0" stroke-width="0.9"><path d="M0.6 3.600 H2.600 L5.200 1 V9.500 L2.600 6.900 H0.6Z" stroke-linejoin="round"></path><path d="M7.500 3.700 L10.800 7 M10.800 3.700 L7.500 7"></path></svg>
<svg style="left:925.500px;top:555.500px" width="11" height="10.500" viewBox="0 0 11 10.500" fill="none" stroke="#f0f0f0" stroke-width="0.9"><path d="M1 9.800 A9 9 0 0 1 10 0.800" opacity=".9"></path><path d="M3.500 9.800 A6.500 6.500 0 0 1 10 3.300"></path><path d="M6 9.800 A4 4 0 0 1 10 5.800"></path><circle cx="9" cy="9" r="0.900" fill="#f0f0f0" stroke="none"></circle></svg>
<svg style="left:941.500px;top:556px" width="13" height="9.500" viewBox="0 0 13 9.500" fill="none" stroke="#f0f0f0" stroke-width="0.9"><rect x="3" y="2.700" width="9" height="5" rx="0.6"></rect><rect x="4.200" y="3.900" width="5.500" height="2.600" fill="#f0f0f0" stroke="none"></rect><path d="M12.500 4.200 V6.200 M0.500 0.800 L1.500 3.800 L3 2.700 M0.8 1.200 L2.600 0.4"></path></svg>
<svg style="left:962px;top:553.300px" width="9.500" height="14" viewBox="0 0 9.500 14" fill="none" stroke="#f0f0f0" stroke-width="0.9"><rect x="0.6" y="3.600" width="6" height="6" rx="1.200"></rect><path d="M6.800 5.800 L9 4.500 V8.800 L6.800 7.500"></path><path d="M1.600 1.600 Q4.700 -0.2 7.800 1.600 M1.600 12.300 Q4.700 14 7.800 12.300"></path></svg>
<span class="t" style="left: 987.8px; font-size: 9.4px; color: rgb(242, 242, 242); top: 547.94px; transform: scaleX(0.839);">10:07</span>
<span class="t" style="left: 980.1px; font-size: 9.4px; color: rgb(242, 242, 242); top: 561.44px; transform: scaleX(0.861);">11.6.2025</span>
<div class="a" style="left:1020.500px;top:545px;width:0.8px;height:30px;background:#7a7a7a"></div>



</body></html>
